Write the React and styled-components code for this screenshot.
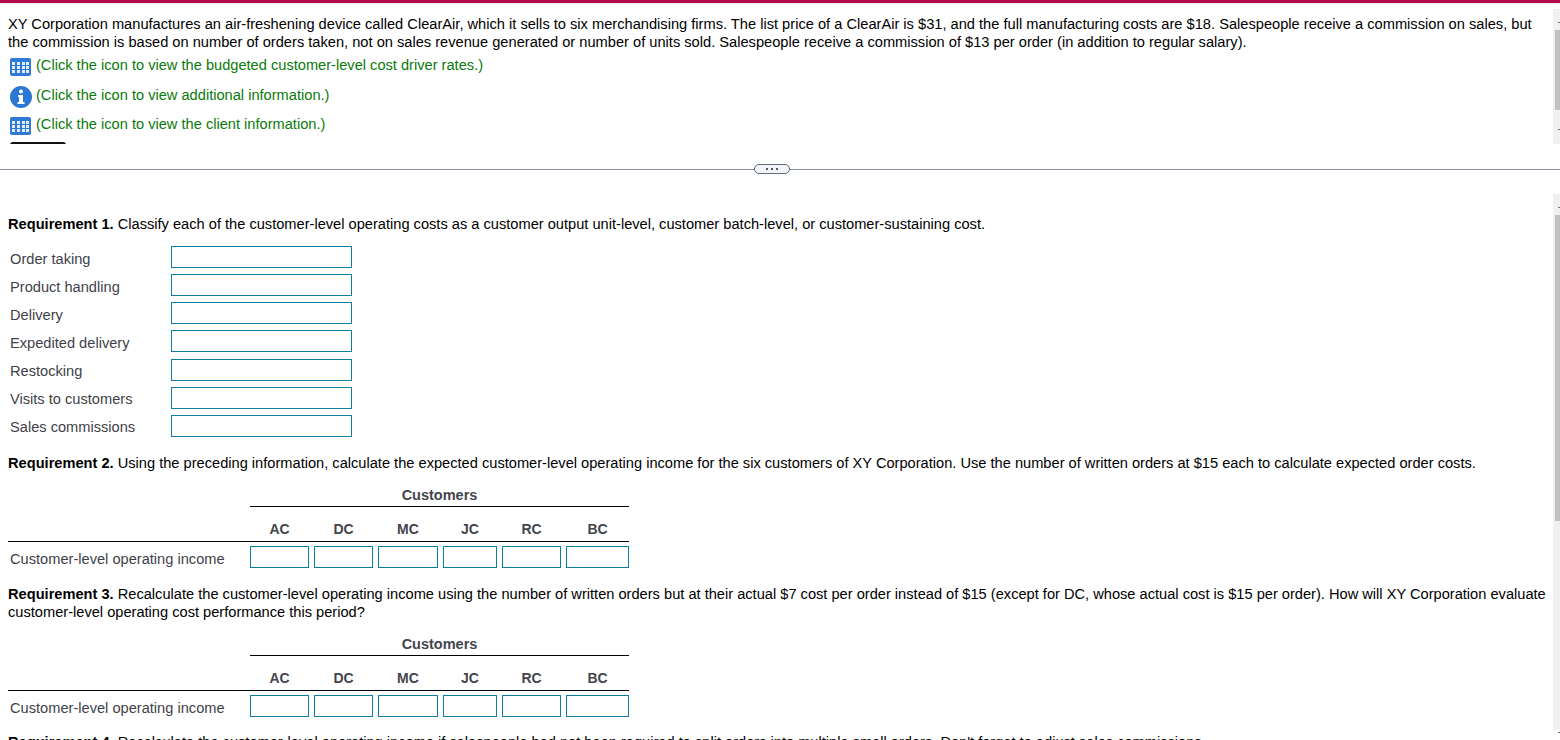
import React from 'react'
import styled, { createGlobalStyle } from 'styled-components'

const GlobalStyle = createGlobalStyle`
    html, body {
        margin: 0;
        padding: 0;
        height: 740px;
        overflow: hidden;
        background: #fff;
    }
    body {
        font-family: "Liberation Sans", Arial, sans-serif;
        font-size: 14.63px;
        line-height: 18px;
        color: #000;
    }
`;

const Page = styled.div`
    display: flex;
    flex-direction: column;
    height: 740px;
    overflow: hidden;
`;

const TopBar = styled.div`
    height: 3px;
    background: #b5094f;
    border-bottom: 1px solid #e8e8e8;
`;

const TopPane = styled.div`
    display: flex;
    box-sizing: border-box;
    height: 140px;
    padding-top: 5px;
    overflow: hidden;
`;

const PaneBody = styled.div`
    flex: 1;
    min-width: 0;
    padding: ${p => p.$top}px 0 0 8px;
    overflow: hidden;
`;

const Track = styled.div`
    position: relative;
    flex: none;
    width: 7px;
    height: ${p => p.$height}px;
    padding: ${p => p.$offset}px 0 0 2px;
    box-sizing: border-box;
    background: #f0f0f0;
    &::before, &::after {
        content: "";
        position: absolute;
        right: 0;
        width: 2px;
        height: 1px;
        background: #707070;
    }
    &::before { top: 13px; }
    &::after { bottom: ${p => p.$arrowEnd}px; }
`;

const Thumb = styled.div`
    height: ${p => p.$height}px;
    background: #c1c1c1;
`;

const Intro = styled.p`
    margin: 0;
    width: 1535px;
    font-size: 14.65px;
`;

const LinkRow = styled.div`
    display: flex;
    align-items: center;
    height: ${p => p.$height}px;
    margin-left: 2px;
    column-gap: 4px;
    color: #0a7a0a;
`;

const IconSlot = styled.span`
    display: flex;
    flex: none;
    width: 22px;
    margin-top: 4px;
`;

const CutTab = styled.div`
    width: 56px;
    height: 3px;
    margin: 4px 0 0 2px;
    border-radius: 3px 3px 0 0;
    background: #111;
`;

const Divider = styled.div`
    display: flex;
    align-items: center;
    height: 50px;
    flex: none;
    &::before, &::after {
        content: "";
        height: 1px;
        background: #8a90a3;
    }
    &::before {
        flex: none;
        width: 754px;
    }
    &::after {
        flex: 1;
    }
`;

const Pill = styled.div`
    display: flex;
    align-items: center;
    justify-content: center;
    column-gap: 3px;
    width: 34px;
    height: 8px;
    border: 1px solid #5d6b7c;
    border-radius: 5px;
    background: #f3f5f8;
`;

const Dot = styled.span`
    width: 2px;
    height: 2px;
    background: #4b5563;
`;

const BottomPane = styled.div`
    display: flex;
    flex: 1;
    min-height: 0;
    overflow: hidden;
`;

const Req = styled.p`
    margin: ${p => p.$top || 0}px 0 0;
    b { font-weight: 700; }
`;

const ClassifyGrid = styled.div`
    display: grid;
    grid-template-columns: 161px 181px;
    grid-auto-rows: 22px;
    row-gap: 6.17px;
    margin: 13px 0 0 2px;
`;

const RowLabel = styled.div`
    display: flex;
    align-items: center;
    box-sizing: border-box;
    padding-top: 3px;
    color: #3f3f4a;
    white-space: nowrap;
`;

const Box = styled.div`
    box-sizing: border-box;
    height: 22px;
    border: 1px solid #0f7f9f;
    background: #fff;
`;

const CustomerGrid = styled.div`
    display: grid;
    grid-template-columns: 237px 59px 59px 60px 54px 59px 63px;
    column-gap: 5px;
    justify-content: start;
    margin-top: ${p => p.$top}px;
`;

const GroupHead = styled.div`
    grid-column: 2 / 8;
    height: 23px;
    line-height: 22px;
    text-align: center;
    font-size: 14.5px;
    font-weight: 700;
    color: #44444c;
    border-bottom: 1px solid #000;
    box-sizing: border-box;
`;

const HeaderRow = styled.div`
    grid-column: 1 / 8;
    display: grid;
    grid-template-columns: subgrid;
    width: 623px;
    height: 35px;
    box-sizing: border-box;
    border-bottom: 1px solid #000;
`;

const ColHead = styled.div`
    align-self: end;
    padding-bottom: 3px;
    text-align: center;
    font-size: 14px;
    font-weight: 700;
    color: #44444c;
`;

const IncomeLabel = styled(RowLabel)`
    height: 22px;
    padding: 4px 0 0 2px;
`;

const BoxRow = styled.div`
    grid-column: 1 / 8;
    display: grid;
    grid-template-columns: subgrid;
    margin-top: 4px;
`;

const GridIcon = () => (
    <svg width="21" height="18" viewBox="0 0 21 18">
        <rect width="21" height="18" rx="2" fill="#2f7ad6" />
        <g fill="#e4eefb">
            {[4, 8, 12].map(y => [2, 7, 12, 16].map(x => (
                <rect key={x + '-' + y} x={x} y={y} width="3" height="3" />
            )))}
        </g>
    </svg>
);

const InfoIcon = () => (
    <svg width="22" height="22" viewBox="0 0 22 22">
        <circle cx="11" cy="11" r="11" fill="#2a77d4" />
        <circle cx="11" cy="5.6" r="2" fill="#fff" />
        <path d="M8 9h5v7h1.5v2h-7v-2H9v-5H8z" fill="#fff" />
    </svg>
);

const costs = ['Order taking', 'Product handling', 'Delivery', 'Expedited delivery', 'Restocking', 'Visits to customers', 'Sales commissions'];
const customers = ['AC', 'DC', 'MC', 'JC', 'RC', 'BC'];

const CustomerTable = ({ top }) => (
    <CustomerGrid $top={top}>
        <div />
        <GroupHead>Customers</GroupHead>
        <HeaderRow>
            <div />
            {customers.map(c => <ColHead key={c}>{c}</ColHead>)}
        </HeaderRow>
        <BoxRow>
            <IncomeLabel>Customer-level operating income</IncomeLabel>
            {customers.map(c => <Box key={c} />)}
        </BoxRow>
    </CustomerGrid>
);

const App = () => {
    return (
        <Page>
            <GlobalStyle />
            <TopBar />
            <TopPane>
                <PaneBody $top={6}>
                    <Intro>
                        XY Corporation manufactures an air-freshening device called ClearAir, which it sells to six merchandising firms. The list price of a ClearAir is $31, and the full manufacturing costs are $18. Salespeople receive a commission on sales, but the commission is based on number of orders taken, not on sales revenue generated or number of units sold. Salespeople receive a commission of $13 per order (in addition to regular salary).
                    </Intro>
                    <LinkRow $height={28}><IconSlot><GridIcon /></IconSlot>(Click the icon to view the budgeted customer-level cost driver rates.)</LinkRow>
                    <LinkRow $height={31}><IconSlot><InfoIcon /></IconSlot>(Click the icon to view additional information.)</LinkRow>
                    <LinkRow $height={28}><IconSlot><GridIcon /></IconSlot>(Click the icon to view the client information.)</LinkRow>
                    <CutTab />
                </PaneBody>
                <Track $height={135} $offset={21} $arrowEnd={14}><Thumb $height={80} /></Track>
            </TopPane>
            <Divider><Pill><Dot /><Dot /><Dot /></Pill></Divider>
            <BottomPane>
                <PaneBody $top={21}>
                    <Req><b>Requirement 1.</b> Classify each of the customer-level operating costs as a customer output unit-level, customer batch-level, or customer-sustaining cost.</Req>
                    <ClassifyGrid>
                        {costs.map(c => (
                            <React.Fragment key={c}>
                                <RowLabel>{c}</RowLabel>
                                <Box />
                            </React.Fragment>
                        ))}
                    </ClassifyGrid>
                    <Req $top={17}><b>Requirement 2.</b> Using the preceding information, calculate the expected customer-level operating income for the six customers of XY Corporation. Use the number of written orders at $15 each to calculate expected order costs.</Req>
                    <CustomerTable top={12} />
                    <Req $top={17}><b>Requirement 3.</b> Recalculate the customer-level operating income using the number of written orders but at their actual $7 cost per order instead of $15 (except for DC, whose actual cost is $15 per order). How will XY Corporation evaluate customer-level operating cost performance this period?</Req>
                    <CustomerTable top={12} />
                    <Req $top={16}><b>Requirement 4.</b> Recalculate the customer-level operating income if salespeople had not been required to split orders into multiple small orders. Don't forget to adjust sales commissions.</Req>
                </PaneBody>
                <Track $height={536} $offset={21} $arrowEnd={-3}><Thumb $height={306} /></Track>
            </BottomPane>
        </Page>
    )
}

export default App
